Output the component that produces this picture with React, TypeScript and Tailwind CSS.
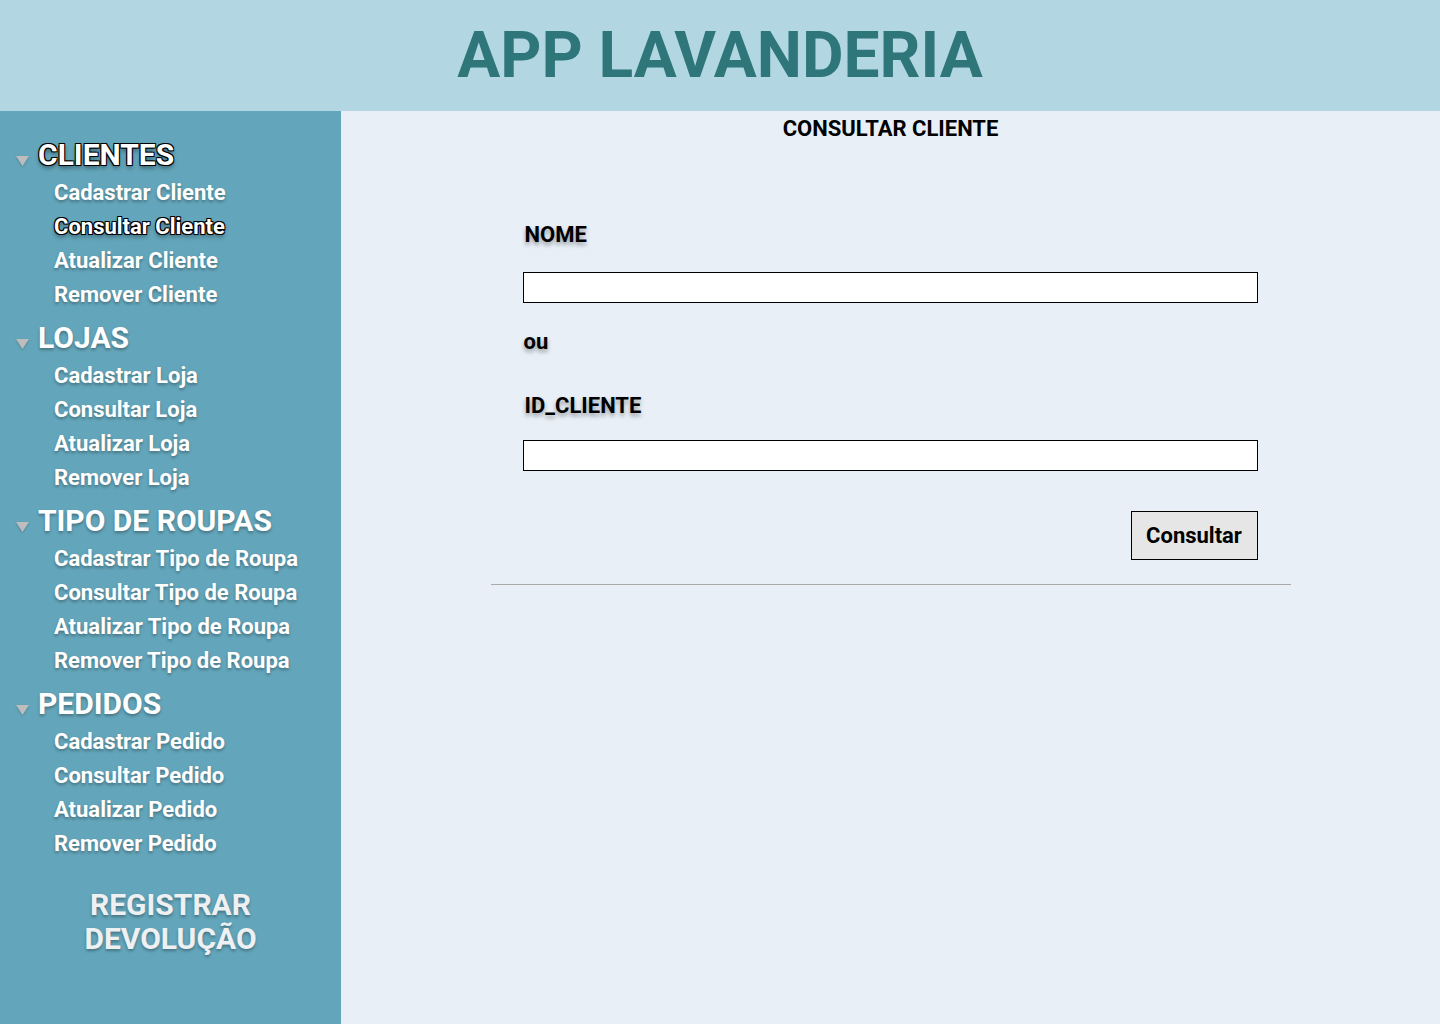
import React from 'react';

const SECTIONS = [
  { title: 'CLIENTES', items: ['Cadastrar Cliente', 'Consultar Cliente', 'Atualizar Cliente', 'Remover Cliente'] },
  { title: 'LOJAS', items: ['Cadastrar Loja', 'Consultar Loja', 'Atualizar Loja', 'Remover Loja'] },
  { title: 'TIPO DE ROUPAS', items: ['Cadastrar Tipo de Roupa', 'Consultar Tipo de Roupa', 'Atualizar Tipo de Roupa', 'Remover Tipo de Roupa'] },
  { title: 'PEDIDOS', items: ['Cadastrar Pedido', 'Consultar Pedido', 'Atualizar Pedido', 'Remover Pedido'] },
];

const ACTIVE_SECTION = 'CLIENTES';
const ACTIVE_ITEM = 'Consultar Cliente';

const soft = '[text-shadow:0_2px_3px_rgba(0,0,0,0.3)]';
const outlined =
  '[text-shadow:-1px_-1px_0_#000,1px_-1px_0_#000,-1px_1px_0_#000,1px_1px_0_#000,0_3px_4px_rgba(0,0,0,0.45)]';

const Triangle = () => (
  <svg width="15" height="12" viewBox="0 0 15 12" className="shrink-0 mt-[12px] drop-shadow-[0_1px_1px_rgba(0,0,0,0.2)]">
    <polygon points="1,1 14,1 7.5,11" fill="#bdbdbd" />
  </svg>
);

const Sidebar = () => (
  <aside className="w-[341px] shrink-0 bg-[#63a5ba] pt-[27px] pb-10 min-h-[913px]">
    {SECTIONS.map((section) => (
      <div key={section.title} className="mb-[9px]">
        <div className="flex items-center gap-[8px] pl-[15px] h-[34px] mb-[4px]">
          <Triangle />
          <span
            className={`text-[30px] leading-[34px] font-bold text-white ${
              section.title === ACTIVE_SECTION ? outlined : soft
            }`}
          >
            {section.title}
          </span>
        </div>
        <ul>
          {section.items.map((item) => (
            <li
              key={item}
              className={`pl-[54px] h-[34px] text-[22px] leading-[34px] font-bold text-white ${
                item === ACTIVE_ITEM ? outlined : soft
              }`}
            >
              {item}
            </li>
          ))}
        </ul>
      </div>
    ))}
    <div className={`mt-[27px] text-center text-[30px] leading-[34px] font-bold text-[#eef0f2] ${soft}`}>
      REGISTRAR
      <br />
      DEVOLUÇÃO
    </div>
  </aside>
);

const label = `text-[22px] leading-[24px] font-bold text-black [text-shadow:0_3px_4px_rgba(0,0,0,0.35)]`;

const Main = () => (
  <main className="flex-1 bg-[#e8eff6] flex flex-col items-center">
    <h2 className="mt-[6px] text-[22px] leading-[24px] font-bold text-black">CONSULTAR CLIENTE</h2>
    <div className="w-[800px] flex flex-col">
      <form className="px-[32px] flex flex-col" onSubmit={(e) => e.preventDefault()}>
        <label className={`mt-[82px] pl-[2px] ${label}`}>NOME</label>
        <input type="text" className="mt-[25px] h-[31px] w-[735px] bg-white border border-black outline-none px-2" />
        <span className={`mt-[27px] pl-[1px] ${label}`}>ou</span>
        <label className={`mt-[40px] pl-[2px] ${label}`}>ID_CLIENTE</label>
        <input type="text" className="mt-[22px] h-[31px] w-[735px] bg-white border border-black outline-none px-2" />
        <div className="mt-[40px] w-[735px] flex justify-end">
          <button
            type="submit"
            className="w-[127px] h-[49px] bg-[#e6e6e6] border border-black text-[22px] font-bold text-black"
          >
            Consultar
          </button>
        </div>
      </form>
      <hr className="mt-[24px] border-0 h-px bg-[#aaaaaa]" />
    </div>
  </main>
);

export default function App() {
  return (
    <div className="min-h-screen flex flex-col font-['Roboto',sans-serif]">
      <header className="h-[111px] bg-[#b2d7e2] flex items-center justify-center">
        <h1 className="text-[64px] leading-none font-bold text-[#2e7679]">APP LAVANDERIA</h1>
      </header>
      <div className="flex flex-1">
        <Sidebar />
        <Main />
      </div>
    </div>
  );
}
